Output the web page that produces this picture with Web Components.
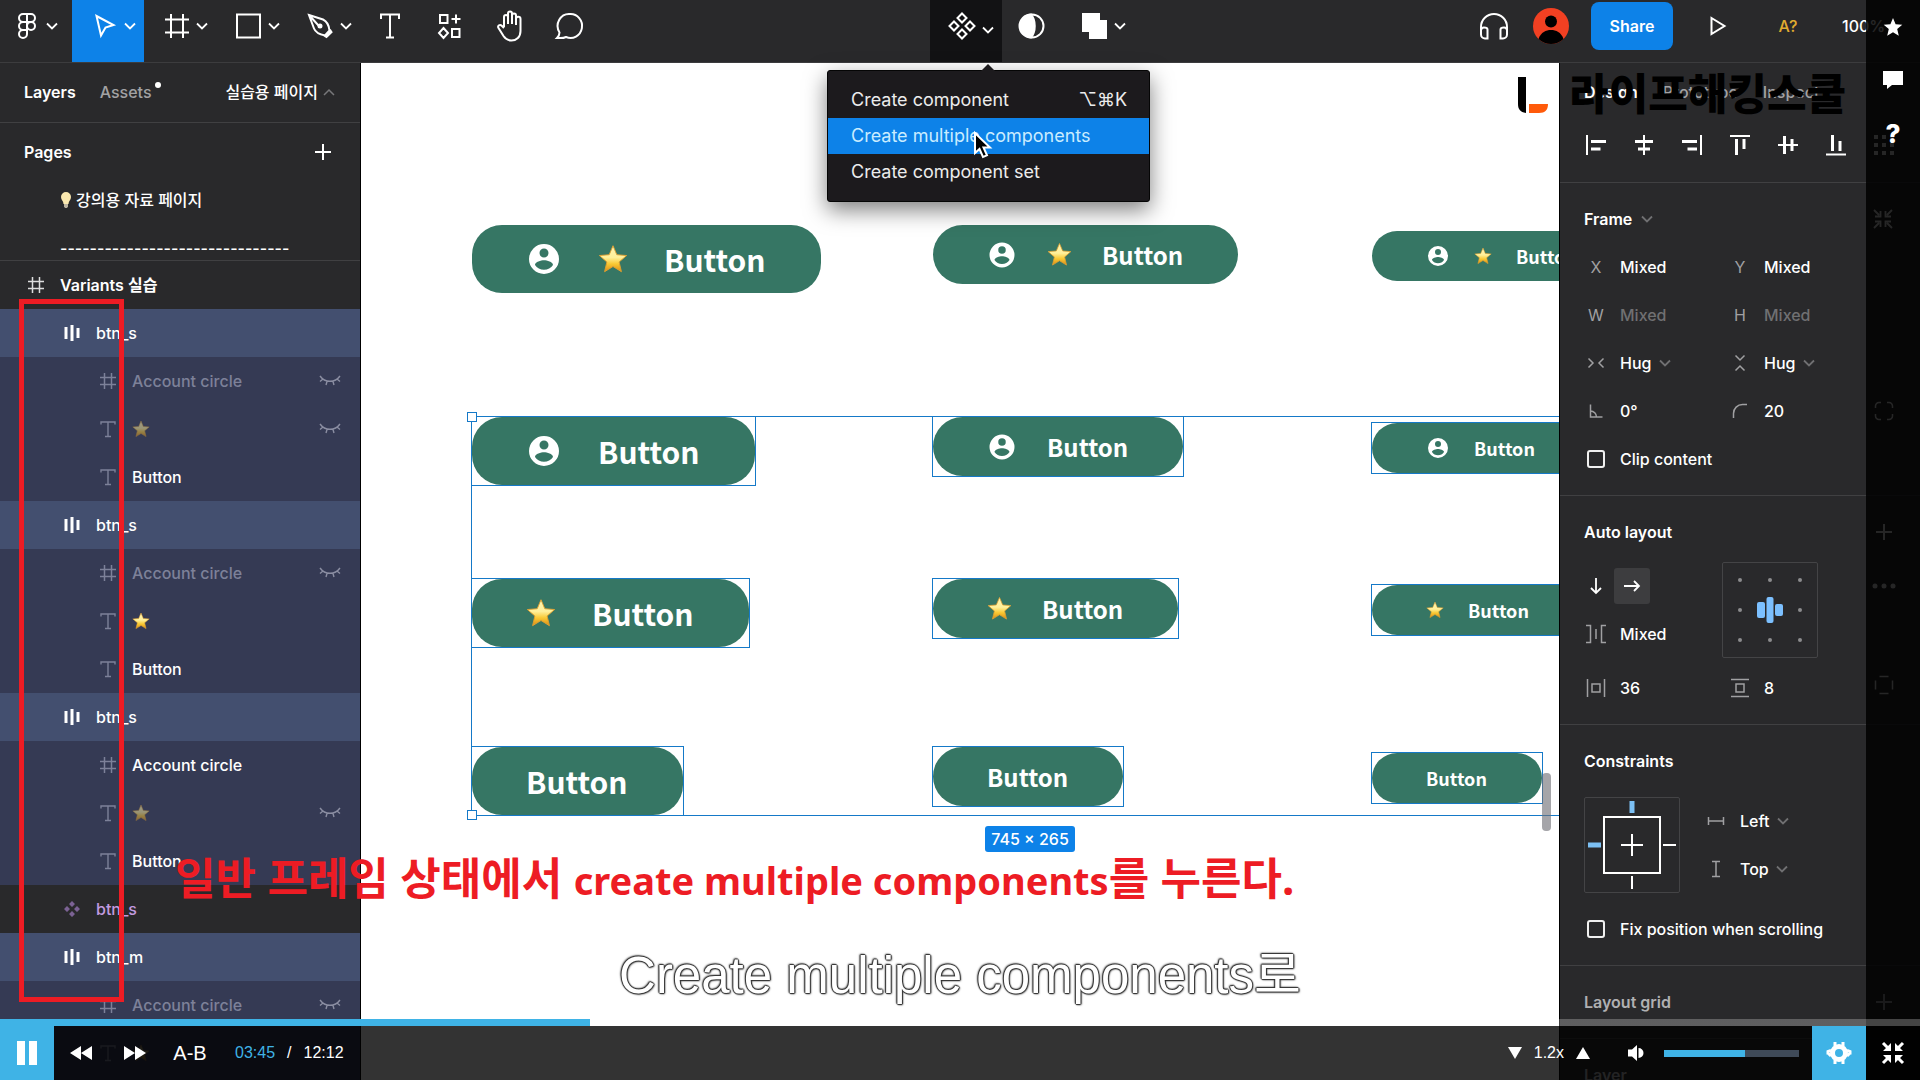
<!DOCTYPE html>
<html lang="ko">
<head>
<meta charset="utf-8">
<title>Variants 실습</title>
<style>
  body {
    margin: 0;
    background: #fff;
    color: #fff;
    font: 500 16px/24px Inter, "Noto Sans CJK KR", sans-serif;
  }
</style>
</head>
<body>
<lecture-player></lecture-player>

<script>
// アイコン: [幅, 高さ, SVGの中身]
const ICONS = {
  chevron: [14, 8, '<path d="M2 1.500l5 5 5-5" stroke-width="1.800"/>'],
  chevronUp: [14, 8, '<path d="M2 7l5-5 5 5" stroke-width="1.500"/>'],
  figma: [18, 26, '<path d="M9 1H5a4 4 0 0 0 0 8h4zM9 1h4a4 4 0 0 1 0 8H9zM9 9H5a4 4 0 0 0 0 8h4zM5 17a4 4 0 1 0 4 4v-4z"/><circle cx="13" cy="13" r="4"/>'],
  move: [22, 24, '<path d="M2.500 2l17 9-8 2.500L7 21.500z"/>'],
  frame: [26, 26, '<path d="M7 1v24M19 1v24M1 6.500h24M1 19.500h24"/>'],
  rect: [26, 26, '<path d="M1 1.500h23v23H1z"/>'],
  pen: [26, 26, '<path d="M1 2l14 4.500c4 2 6 6 6.500 11l-4.500 5c-5-1-9.500-3-11-7zM1 2l9.500 10.500M17 23l5.500-5.500 1 1.500-5 5z"/><circle cx="12" cy="13" r="1.500" fill="currentColor"/>'],
  text: [22, 26, '<path d="M2 6V1.500h18V6M11 1.500v23M7 24.500h8"/>'],
  resources: [26, 26, '<path d="M3 2h7.500v8H3zM15 16h7.500v8H15zM19 1.500v9M14.500 6h9M6.500 15l4.500 5-4.500 5L2 20z"/>'],
  hand: [30, 32, '<path d="M9 17V7a2 2 0 0 1 4 0v7M13 13V3.500a2 2 0 0 1 4 0V14M17 5.500a2 2 0 0 1 4 0V15M21 9a2 2 0 0 1 4.500 0v12c0 6-4 9.500-9 9.500-4 0-6-1.500-8-4.500l-5-8c-1.500-2.500 1.500-4 3.500-2L9 18"/>'],
  comment: [28, 28, '<path d="M14 2a11.500 12 0 1 1-4 23c-3 1.500-6 1-9 1 2-2 2.500-3 2.500-5.500A11.500 12 0 0 1 14 2z"/>'],
  component: [28, 28, '<path d="M13 1.500l4.500 4.500-4.500 4.500L8.500 6zM13 17.500l4.500 4.500-4.500 4.500L8.500 22zM5 9.500l4.500 4.500L5 18.500.5 14zM21 9.500l4.500 4.500-4.500 4.500-4.500-4.500z"/>'],
  mask: [26, 26, '<circle cx="13" cy="13" r="11.500"/><path d="M12 1.500a11.500 11.500 0 0 0 0 23c5-6 5-17 0-23z" fill="currentColor"/>'],
  union: [26, 26, '<path d="M1 1h16v7h7v17H8v-7H1z" fill="currentColor"/>'],
  headphones: [30, 28, '<path d="M2 19v-4a13 13 0 0 1 26 0v4M8.500 17.500v9H6a4 4 0 0 1-4-4v-4.500a3 3 0 0 1 3-2.500c2 0 3.500.5 3.500 2zM21.500 17.500v9H24a4 4 0 0 0 4-4v-4.500a3 3 0 0 0-3-2.500c-2 0-3.500.5-3.500 2z"/>'],
  avatar: [36, 36, '<circle cx="18" cy="18" r="18" fill="#f24022" stroke="none"/><circle cx="18" cy="13.500" r="6" fill="#000" stroke="none"/><path d="M5.500 31C8 24 13 22 18 22s10 2 12.500 9a18 18 0 0 1-25 0z" fill="#000" stroke="none"/>'],
  play: [18, 20, '<path d="M2.500 2l13 8-13 8z"/>'],
  plus: [18, 18, '<path d="M9 1v16M1 9h16"/>'],
  bulb: [12, 18, '<path d="M6 1a5 5 0 0 1 5 5c0 3-2.500 4-2.500 7h-5C3.500 10 1 9 1 6a5 5 0 0 1 5-5z" fill="#fbe9b0" stroke="none"/><path d="M4 13h4v2.500l-1 1.500H5l-1-1.500z" fill="#bbb3a0" stroke="none"/>'],
  hash: [18, 18, '<path d="M5.500 1v16M12.500 1v16M1 5.500h16M1 12.500h16" stroke-width="1.500"/>'],
  tee: [16, 18, '<path d="M1 4.500V2h14v2.500M8 2v14M5 16.500h6" stroke-width="1.400"/>'],
  bars: [18, 18, '<path d="M1.500 3h3v12h-3zM7.500 1h3v16h-3zM13.500 4h3v10h-3z" fill="currentColor" stroke="none"/>'],
  diamonds: [18, 18, '<path d="M9 1l3 3-3 3-3-3zM9 11l3 3-3 3-3-3zM4 6l3 3-3 3-3-3zM14 6l3 3-3 3-3-3z" fill="currentColor" stroke="none"/>'],
  hidden: [22, 12, '<path d="M1 1c5 7 15 7 20 0M4 4L1 6.500M8 6.500L7 10M14 6.500l1 3.500M18 4l3 2.500" stroke-width="1.400"/>'],
  star: [26, 26, '<defs><linearGradient id="g" x1="0" y1="0" x2="0" y2="1"><stop offset="0" stop-color="#fff3b0"/><stop offset=".45" stop-color="#fff09a"/><stop offset=".7" stop-color="#f9c934"/><stop offset="1" stop-color="#dd8d14"/></linearGradient></defs><path d="M13 1.500l3.300 7.800 8.500.7-6.500 5.600 2 8.400-7.300-4.500L5.700 24l2-8.400L1.200 10l8.500-.7z" fill="url(#g)" stroke="#e0a030" stroke-width=".8" stroke-linejoin="round"/>'],
  account: [24, 24, '<path d="M12 2a10 10 0 1 0 0 20 10 10 0 0 0 0-20zm0 3a3 3 0 1 1 0 6 3 3 0 0 1 0-6zm0 14.200a7.200 7.200 0 0 1-6-3.220c.03-1.990 4-3.080 6-3.080 1.990 0 5.970 1.090 6 3.080a7.200 7.200 0 0 1-6 3.220z" fill="currentColor" stroke="none"/>'],
  alignLeft: [22, 22, '<path d="M2 1v20" /><path d="M6 7.500h15M6 15h9.500" stroke-width="3"/>'],
  alignCenter: [22, 22, '<path d="M11 1v20" /><path d="M2 7.500h18M5 15h12" stroke-width="3"/>'],
  alignRight: [22, 22, '<path d="M20 1v20" /><path d="M1 7.500h15M6.500 15H16" stroke-width="3"/>'],
  alignTop: [22, 22, '<path d="M1 2h20" /><path d="M7.500 5v16M15 5v10" stroke-width="3"/>'],
  alignMiddle: [22, 22, '<path d="M1 11h20" /><path d="M7.500 2v18M15 5v12" stroke-width="3"/>'],
  alignBottom: [22, 22, '<path d="M1 20.500h20" /><path d="M7.500 1v16M15 7v10" stroke-width="3"/>'],
  dots9: [20, 20, '<path d="M0 2h4m4 0h4m4 0h4M0 10h4m4 0h4m4 0h4M0 18h4m4 0h4m4 0h4" stroke-width="4"/>'],
  shrink: [20, 20, '<path d="M1 1l5 5M7.500 2v5.500H2M19 1l-5 5M12.500 2v5.500H18M1 19l5-5M2 12.500h5.500V18M19 19l-5-5M18 12.500h-5.500V18" stroke-width="1.800"/>'],
  hugX: [18, 14, '<path d="M1.500 2.500L6 7l-4.500 4.500M16.500 2.500L12 7l4.500 4.500" stroke-width="1.500"/>'],
  hugY: [14, 18, '<path d="M2.500 1.500L7 6l4.500-4.500M2.500 16.500L7 12l4.500 4.500" stroke-width="1.500"/>'],
  angle: [16, 16, '<path d="M2.500 1.500v12.500h12M2.500 8a6 6 0 0 1 6 6" stroke-width="1.500"/>'],
  radius: [16, 16, '<path d="M1.500 15v-4.500a9 9 0 0 1 9-9H15" stroke-width="1.500"/>'],
  corners: [20, 20, '<path d="M1.500 7V5a3.500 3.500 0 0 1 3.500-3.500h2M13 1.500h2A3.500 3.500 0 0 1 18.500 5v2M18.500 13v2a3.500 3.500 0 0 1-3.500 3.500h-2M7 18.500H5A3.500 3.500 0 0 1 1.500 15v-2" stroke-width="1.500"/>'],
  sides: [20, 20, '<path d="M5.500 1.500h9M5.500 18.500h9M1.500 5.500v9M18.500 5.500v9" stroke-width="1.500"/>'],
  more: [24, 6, '<g fill="currentColor" stroke="none"><circle cx="3" cy="3" r="2.500"/><circle cx="12" cy="3" r="2.500"/><circle cx="21" cy="3" r="2.500"/></g>'],
  down: [14, 18, '<path d="M7 1v15M2 11l5 5 5-5" stroke-width="1.800"/>'],
  right: [18, 14, '<path d="M1 7h15M11 2l5 5-5 5" stroke-width="1.800"/>'],
  spacing: [22, 20, '<path d="M1 1.500h4.500v17H1M21 1.500h-4.500v17H21M11 5v10" stroke-width="1.500"/>'],
  padX: [20, 20, '<path d="M1.500 1v18M18.500 1v18M6 6h8v8H6z" stroke-width="1.500"/>'],
  padY: [20, 20, '<path d="M1 1.500h18M1 18.500h18M6 6h8v8H6z" stroke-width="1.500"/>'],
  conX: [18, 10, '<path d="M1.500 1v8M16.500 1v8M1.500 5h15" stroke-width="1.500"/>'],
  conY: [10, 18, '<path d="M1 1.500h8M1 16.500h8M5 1.500v15" stroke-width="1.500"/>'],
  alignPad: [96, 96, '<rect x=".5" y=".5" width="95" height="95" rx="1.500" stroke="#444446" stroke-width="1"/><g fill="#8c8c8e" stroke="none"><circle cx="18" cy="18" r="2"/><circle cx="48" cy="18" r="2"/><circle cx="78" cy="18" r="2"/><circle cx="18" cy="48" r="2"/><circle cx="78" cy="48" r="2"/><circle cx="18" cy="78" r="2"/><circle cx="48" cy="78" r="2"/><circle cx="78" cy="78" r="2"/></g><g fill="#7cc0ff" stroke="none"><rect x="35" y="40" width="8" height="16" rx="2"/><rect x="44.500" y="35" width="7" height="26" rx="2"/><rect x="53" y="42" width="8" height="12" rx="2"/></g>'],
  constraintPad: [96, 96, '<rect x=".5" y=".5" width="95" height="95" rx="1.500" stroke="#444446" stroke-width="1"/><path d="M20 20h56v56H20zM48 37v22M37 48h22M79 48h13M48 79v13"/><path d="M48 4v12M4 48h13" stroke="#7cc0f4" stroke-width="5"/>'],
  pointer: [20, 28, '<path d="M2 2v20l4.500-4 3.500 8 4-1.700-3.500-7.800h6.500z" fill="#000" stroke="#fff"/>'],
  logo: [32, 36, '<path d="M1 0h8v36C3 35 1 32 1 27z" fill="#000" stroke="none"/><path d="M12 27h19c0 6-3 9-9 9H12z" fill="#ff5a0a" stroke="none"/>'],
  fav: [20, 20, '<path d="M10 1l2.600 6.200 6.700.5-5.100 4.400 1.600 6.600L10 15.200l-5.800 3.500 1.600-6.600L.7 7.700l6.700-.5z" fill="currentColor" stroke="none"/>'],
  bubble: [20, 20, '<path d="M0 1h20v14H9l-5 4v-4H0z" fill="currentColor" stroke="none"/>'],
  pause: [20, 24, '<path d="M0 0h8v24H0zM12 0h8v24h-8z" fill="currentColor" stroke="none"/>'],
  rewind: [22, 14, '<path d="M11 0v14L0 7zM22 0v14L11 7z" fill="currentColor" stroke="none"/>'],
  forward: [22, 14, '<path d="M0 0v14l11-7zM11 0v14l11-7z" fill="currentColor" stroke="none"/>'],
  triDown: [14, 12, '<path d="M0 0h14L7 12z" fill="currentColor" stroke="none"/>'],
  triUp: [14, 12, '<path d="M0 12h14L7 0z" fill="currentColor" stroke="none"/>'],
  volume: [16, 16, '<path d="M0 4.500h4L9 0v16l-5-4.500H0zM10.500 3a5 5 0 0 1 0 10z" fill="currentColor" stroke="none"/>'],
  gear: [24, 24, '<circle cx="12" cy="12" r="6.500" stroke-width="5"/><path d="M8 1v4M16 1v4M8 19v4M16 19v4M1 13.500v-3l3-1M23 13.500v-3l-3-1M1 12l3 3M23 12l-3 3" stroke-width="3"/>'],
  exit: [22, 22, '<path d="M1 1l5 5M21 1l-5 5M1 21l5-5M21 21l-5-5" stroke-width="3"/><path d="M9 1v8H1l3-3 2-2zM13 1v8h8l-3-3-2-2zM9 21v-8H1l3 3 2 2zM13 21v-8h8l-3 3-2 2z" fill="currentColor" stroke="none"/>'],
};

// Shadow DOMを作る共通処理
const attach = (host, html) => {
  const template = document.createElement("template");
  template.innerHTML = `<style>
    *, ::before { box-sizing: border-box; }
    button, input, select {
      margin: 0; padding: 0; border: 0; outline: 0; border-radius: 0;
      background: none; color: inherit; font: inherit; appearance: none;
    }
    button { display: flex; align-items: center; justify-content: center; }
    a { color: inherit; text-decoration: none; }
  </style>${html}`;
  host.attachShadow({ mode: "open" }).appendChild(template.content.cloneNode(true));
};

class UiIcon extends HTMLElement {
  constructor() {
    super();
    this.attachShadow({ mode: "open" });
  }
  connectedCallback() {
    const [w, h, body] = ICONS[this.getAttribute("name")];
    const size = this.getAttribute("size");
    this.shadowRoot.innerHTML = `<style>
      :host { display: inline-flex; flex: none; }
      svg { display: block; overflow: visible; }
    </style>
    <svg width="${size || w}" height="${size || h}" viewBox="0 0 ${w} ${h}" fill="none" stroke="currentColor" stroke-width="2" aria-hidden="true">${body}</svg>`;
  }
}

class ToolButton extends HTMLElement {
  connectedCallback() {
    const icon = this.getAttribute("icon");
    attach(this, `<style>
      :host { display: block; width: 60px; }
      :host([menu]) { width: 72px; }
      :host([active]) { background: #0d82e8; }
      :host([open]) { background: #121214; }
      button { width: 100%; height: 62px; padding-bottom: 10px; }
      :host([menu]) button { gap: 5px; justify-content: flex-start; padding-left: 20px; }
      :host([first]) button { padding-left: 14px; }
      .box { display: flex; width: 26px; justify-content: center; }
      :host([open]) .arrow { padding-top: 8px; }
    </style>
    <button aria-label="${icon}"><span class="box"><ui-icon name="${icon}"></ui-icon></span>
      ${this.hasAttribute("menu") ? '<ui-icon class="arrow" name="chevron"></ui-icon>' : ""}</button>`);
  }
}

class ComponentMenu extends HTMLElement {
  constructor() {
    super();
    attach(this, `<style>
      :host {
        position: relative; display: block; width: 323px; padding: 11px 0;
        background: #1c1a1d; border: 1px solid #050505; border-radius: 3px;
        box-shadow: 0 8px 22px rgba(0, 0, 0, .5); color: #ececec;
        font-size: 18px; font-weight: 400;
      }
      :host::before {
        content: ""; position: absolute; left: 153px; top: -7px;
        border: 7px solid transparent; border-top: 0; border-bottom-color: #1c1a1d;
      }
      button { width: 100%; height: 36px; padding: 0 22px 0 23px; justify-content: space-between; }
      .on { background: #0d82e8; color: #c9ecff; }
    </style>
    <button><span>Create component</span><span>⌥⌘K</span></button>
    <button class="on">Create multiple components</button>
    <button>Create component set</button>`);
  }
}

class TopToolbar extends HTMLElement {
  constructor() {
    super();
    attach(this, `<style>
      :host { display: flex; justify-content: space-between; height: 63px; background: #29292b; border-bottom: 1px solid #3c3c3e; }
      div { display: flex; }
      .right { height: 52px; align-items: center; }
      .right > * { display: flex; justify-content: center; }
      .phones { width: 36px; }
      .me { width: 78px; }
      .share { width: 84px; }
      .share button { width: 82px; height: 48px; border-radius: 8px; background: #0d82e8; font-weight: 600; }
      .play { width: 88px; }
      .missing { width: 52px; color: #e0ac30; }
      .right .zoom { width: 106px; padding-left: 28px; justify-content: flex-start; }
      .anchor { position: relative; }
      component-menu { position: absolute; left: -103px; top: 70px; z-index: 2; }
    </style>
    <div>
      <tool-button icon="figma" menu first></tool-button>
      <tool-button icon="move" menu active></tool-button>
      <tool-button icon="frame" menu></tool-button>
      <tool-button icon="rect" menu></tool-button>
      <tool-button icon="pen" menu></tool-button>
      <tool-button icon="text"></tool-button>
      <tool-button icon="resources"></tool-button>
      <tool-button icon="hand"></tool-button>
      <tool-button icon="comment"></tool-button>
    </div>
    <div>
      <div class="anchor">
        <tool-button icon="component" menu open></tool-button>
        <component-menu></component-menu>
      </div>
      <tool-button icon="mask"></tool-button>
      <tool-button icon="union" menu></tool-button>
      <span style="width: 12px"></span>
    </div>
    <div class="right">
      <button class="phones" aria-label="Audio"><ui-icon name="headphones"></ui-icon></button>
      <span class="me"><ui-icon name="avatar"></ui-icon></span>
      <span class="share"><button>Share</button></span>
      <button class="play" aria-label="Present"><ui-icon name="play"></ui-icon></button>
      <button class="missing">A?</button>
      <button class="zoom">100%</button>
    </div>`);
  }
}

class LayerRow extends HTMLElement {
  connectedCallback() {
    const icon = this.getAttribute("icon");
    attach(this, `<style>
      :host { display: flex; align-items: center; height: 48px; padding: 0 19px 0 99px; gap: 15px; background: #353a54; }
      .icon { display: flex; width: 18px; justify-content: center; color: #7d8199; }
      .name { flex: 1; display: flex; }
      .eye { color: #8b8ea2; }
      :host([parent]) { padding-left: 63px; background: #434f6f; }
      :host([parent]) .icon { color: #fff; }
      :host([top]) { padding-left: 27px; background: none; font-weight: 600; }
      :host([top]) .icon { color: #ddd; }
      :host([main]) { padding-left: 63px; background: none; color: #c29be0; }
      :host([main]) .icon { color: #7b6294; }
      :host([off]) .name { color: #7d8199; }
      :host([off]) .name ::slotted(ui-icon) { opacity: .5; }
    </style>
    <span class="icon"><ui-icon name="${icon}"></ui-icon></span>
    <span class="name"><slot></slot></span>
    ${this.hasAttribute("off") ? '<ui-icon class="eye" name="hidden"></ui-icon>' : ""}`);
  }
}

class LayersPanel extends HTMLElement {
  constructor() {
    super();
    // [btnの名前, アイコン非表示, 星非表示]
    const groups = [["btn_s", true, true], ["btn_s", true, false], ["btn_s", false, true]];
    const children = (accountOff, starOff) => `
      <layer-row icon="hash" ${accountOff ? "off" : ""}>Account circle</layer-row>
      <layer-row icon="tee" ${starOff ? "off" : ""}><ui-icon name="star" size="18"></ui-icon></layer-row>
      <layer-row icon="tee">Button</layer-row>`;
    attach(this, `<style>
      :host { display: block; overflow: hidden; background: #29292b; border-right: 1px solid #000; }
      header { display: flex; align-items: center; height: 60px; padding: 0 24px 2px; gap: 24px; border-bottom: 1px solid #404042; }
      header b { font-weight: 600; }
      .assets { position: relative; color: #a2a2a4; }
      .assets::after { content: ""; position: absolute; right: -9px; top: 2px; width: 6px; height: 6px; border-radius: 3px; background: #fff; }
      .page { display: flex; align-items: center; gap: 4px; margin-left: auto; }
      .page ui-icon { color: #77777a; }
      .pages { height: 138px; padding-top: 5px; overflow: hidden; border-bottom: 1px solid #404042; }
      .pages div { display: flex; align-items: center; height: 48px; padding-left: 60px; gap: 4px; }
      .pages .title { justify-content: space-between; padding: 0 28px 0 24px; font-weight: 600; }
    </style>
    <header>
      <b>Layers</b><a class="assets" href="#">Assets</a>
      <button class="page">실습용 페이지<ui-icon name="chevronUp"></ui-icon></button>
    </header>
    <section class="pages">
      <div class="title">Pages<button aria-label="Add page"><ui-icon name="plus"></ui-icon></button></div>
      <div><ui-icon name="bulb"></ui-icon><a href="#">강의용 자료 페이지</a></div>
      <div>-------------------------------</div>
    </section>
    <layer-row top icon="hash">Variants 실습</layer-row>
    ${groups.map(([name, a, s]) => `<layer-row parent icon="bars">${name}</layer-row>${children(a, s)}`).join("")}
    <layer-row main icon="diamonds">btn_s</layer-row>
    <layer-row parent icon="bars">btn_m</layer-row>
    ${children(true, true)}`);
  }
}

class DesignButton extends HTMLElement {
  connectedCallback() {
    const [icon, star] = { l: [36, 30], m: [30, 25], s: [24, 18] }[this.getAttribute("size")];
    attach(this, `<style>
      :host {
        display: flex; align-items: center; width: max-content; height: 68px; padding: 0 55px 0 54px; gap: 36px;
        border-radius: 30px; background: #367664; font: 700 30px/36px "Noto Sans CJK KR", sans-serif;
      }
      :host([size="m"]) { height: 59px; gap: 30px; font-size: 24px; }
      :host([size="s"]) { height: 50px; gap: 24px; font-size: 18px; }
    </style>
    ${this.hasAttribute("account") ? `<ui-icon name="account" size="${icon}"></ui-icon>` : ""}
    ${this.hasAttribute("star") ? `<ui-icon name="star" size="${star}"></ui-icon>` : ""}
    <span>Button</span>`);
  }
}

class DesignCanvas extends HTMLElement {
  constructor() {
    super();
    // キャンバス上のノード: 列のx座標と行のy座標
    const columns = [["l", 111, 0], ["m", 572, 0], ["s", 1011, 6]];
    const rows = [[162, "account star", ""], [354, "account", "picked"], [516, "star", "picked"], [684, "", "picked"]];
    const nodes = rows.flatMap(([y, parts, cls]) => columns.map(([size, x, dy]) =>
      `<div class="node ${cls}" style="left: ${x}px; top: ${y + dy}px"><design-button size="${size}" ${parts}></design-button></div>`));
    attach(this, `<style>
      :host { display: block; position: relative; overflow: hidden; background: #fff; border-top: 1px solid #000; margin-top: -1px; }
      .node { position: absolute; }
      .picked { outline: 1px solid #1579c8; }
      .selection { position: absolute; left: 111px; top: 354px; width: 1141px; height: 398px; outline: 1px solid #1579c8; }
      .handle { position: absolute; left: -5px; width: 10px; height: 10px; border: 1px solid #1579c8; background: #fff; }
      .handle.a { top: -5px; }
      .handle.b { bottom: -5px; }
      .size { position: absolute; left: 624px; top: 763px; width: 90px; height: 26px; border-radius: 3px; background: #0d82e8; line-height: 26px; text-align: center; }
      .scroll { position: absolute; right: 8px; top: 710px; width: 9px; height: 58px; border-radius: 4px; background: rgba(110, 110, 116, .62); }
    </style>
    ${nodes.join("")}
    <div class="selection"><span class="handle a"></span><span class="handle b"></span></div>
    <div class="size">745 × 265</div>
    <div class="scroll"></div>`);
  }
}

class PropField extends HTMLElement {
  connectedCallback() {
    const value = this.getAttribute("value");
    const label = this.getAttribute("label");
    const icon = this.getAttribute("icon");
    const control = this.hasAttribute("select")
      ? `<select id="f"><option>${value}</option></select><ui-icon class="arrow" name="chevron"></ui-icon>`
      : `<input id="f" value="${value}">`;
    attach(this, `<style>
      :host { display: flex; align-items: center; height: 48px; }
      label { display: flex; justify-content: center; width: 24px; margin-right: 12px; color: #a0a0a2; font-weight: 400; }
      input { width: 80px; }
      .arrow { margin-left: 6px; color: #707072; }
      :host([muted]) input { color: #707072; }
    </style>
    <label for="f" ${icon ? `aria-label="${label}"` : ""}>${icon ? `<ui-icon name="${icon}"></ui-icon>` : label}</label>${control}`);
  }
}

class CheckField extends HTMLElement {
  constructor() {
    super();
    attach(this, `<style>
      :host { display: flex; align-items: center; height: 48px; padding-left: 3px; }
      input { width: 18px; height: 18px; margin-right: 15px; border: 2px solid #f0f0f0; border-radius: 3px; }
    </style>
    <input type="checkbox" id="c"><label for="c"><slot></slot></label>`);
  }
}

class PanelSection extends HTMLElement {
  constructor() {
    super();
    attach(this, `<style>
      :host { display: block; padding: 12px 0 12px 24px; border-bottom: 1px solid #404042; }
      header { display: flex; align-items: center; height: 48px; padding-right: 27px; font-weight: 600; }
      slot[name="title"] { display: flex; align-items: center; gap: 8px; }
      .side { display: flex; margin-left: auto; }
      :host([muted]) header { color: #b0b0b2; }
    </style>
    <header><slot name="title"></slot><span class="side"><slot name="action"></slot></span></header>
    <slot></slot>`);
  }
}

class DesignPanel extends HTMLElement {
  constructor() {
    super();
    const aligns = ["alignLeft", "alignCenter", "alignRight", "alignTop", "alignMiddle", "alignBottom", "dots9"];
    attach(this, `<style>
      :host { display: block; overflow: hidden; background: #29292b; border-left: 1px solid #000; }
      nav { display: flex; align-items: center; height: 58px; padding-left: 24px; gap: 25px; color: #a2a2a4; }
      nav b { font-weight: 600; color: #fff; }
      .aligns { display: flex; height: 62px; padding: 0 12px 13px; border-bottom: 1px solid #404042; }
      .aligns button { width: 48px; }
      .grid { display: grid; grid-template-columns: 144px 144px 1fr; align-items: center; }
      .grid > ui-icon { justify-self: center; margin-right: 24px; }
      .auto { padding-top: 6px; }
      .dir { display: flex; align-items: center; height: 48px; }
      .dir button { width: 24px; height: 36px; margin-right: 6px; }
      .dir .on { width: 36px; border-radius: 3px; background: #3d3d3f; }
      .pad { grid-row: span 2; margin-left: -6px; width: 96px; height: 96px; }
      .last { height: 54px; padding-top: 6px; }
      .constraints { display: flex; gap: 24px; padding: 12px 0; }
      .caret { color: #707072; }
    </style>
    <nav><b>Design</b><a href="#">Prototype</a><a href="#">Inspect</a></nav>
    <div class="aligns">${aligns.map((n) => `<button aria-label="${n}"><ui-icon name="${n}"></ui-icon></button>`).join("")}</div>
    <panel-section>
      <span slot="title">Frame</span><ui-icon class="caret" slot="title" name="chevron"></ui-icon>
      <ui-icon slot="action" name="shrink"></ui-icon>
      <div class="grid">
        <prop-field label="X" value="Mixed"></prop-field><prop-field label="Y" value="Mixed"></prop-field><span></span>
        <prop-field label="W" value="Mixed" muted></prop-field><prop-field label="H" value="Mixed" muted></prop-field><span></span>
        <prop-field label="Width" icon="hugX" value="Hug" select></prop-field><prop-field label="Height" icon="hugY" value="Hug" select></prop-field><span></span>
        <prop-field label="Rotation" icon="angle" value="0°"></prop-field><prop-field label="Radius" icon="radius" value="20"></prop-field><ui-icon name="corners"></ui-icon>
      </div>
      <check-field>Clip content</check-field>
    </panel-section>
    <panel-section>
      <span slot="title">Auto layout</span>
      <ui-icon slot="action" name="plus"></ui-icon>
      <div class="grid auto">
        <div class="dir">
          <button aria-label="Vertical"><ui-icon name="down"></ui-icon></button>
          <button class="on" aria-label="Horizontal"><ui-icon name="right"></ui-icon></button>
        </div>
        <div class="pad"><ui-icon name="alignPad"></ui-icon></div>
        <ui-icon name="more"></ui-icon>
        <prop-field label="Spacing" icon="spacing" value="Mixed"></prop-field><span></span>
        <prop-field class="last" label="Horizontal padding" icon="padX" value="36"></prop-field>
        <prop-field class="last" label="Vertical padding" icon="padY" value="8"></prop-field>
        <ui-icon name="sides"></ui-icon>
      </div>
    </panel-section>
    <panel-section>
      <span slot="title">Constraints</span>
      <div class="constraints">
        <ui-icon name="constraintPad"></ui-icon>
        <div>
          <prop-field label="Horizontal" icon="conX" value="Left" select></prop-field>
          <prop-field label="Vertical" icon="conY" value="Top" select></prop-field>
        </div>
      </div>
      <check-field>Fix position when scrolling</check-field>
    </panel-section>
    <panel-section muted><span slot="title">Layout grid</span><ui-icon slot="action" name="plus"></ui-icon></panel-section>
    <panel-section muted><span slot="title">Layer</span></panel-section>`);
  }
}

class PlayerControls extends HTMLElement {
  constructor() {
    super();
    attach(this, `<style>
      :host { display: block; font: 400 16px/24px "Liberation Sans", sans-serif; }
      input { display: block; height: 7px; }
      input::-webkit-slider-thumb { appearance: none; width: 0; height: 0; }
      .seek { width: 100%; background: linear-gradient(90deg, #3fb3e6 calc(225 / 732 * 100%), rgba(255, 255, 255, .25) 0); }
      .bar { display: flex; align-items: center; height: 54px; background: rgba(0, 0, 0, .8); }
      .block { width: 54px; height: 54px; }
      .blue { background: #3fb3e6; }
      .step { width: 54px; height: 54px; }
      .ab { width: 56px; font-size: 20px; }
      .time { display: flex; gap: 12px; margin-left: 17px; }
      .time b { font-weight: 400; color: #3fb3e6; }
      .speed { display: flex; align-items: center; gap: 12px; margin-left: auto; }
      .volume { display: flex; align-items: center; gap: 20px; margin: 0 13px 0 38px; }
      .volume input { width: 135px; background: linear-gradient(90deg, #3fb3e6 60%, #3f4a58 0); }
    </style>
    <input class="seek" type="range" min="0" max="732" value="225" aria-label="Seek">
    <div class="bar">
      <button class="block blue" aria-label="Pause"><ui-icon name="pause"></ui-icon></button>
      <button class="step" aria-label="Rewind"><ui-icon name="rewind"></ui-icon></button>
      <button class="step" aria-label="Forward"><ui-icon name="forward"></ui-icon></button>
      <button class="ab">A-B</button>
      <div class="time"><b>03:45</b><span>/</span><span>12:12</span></div>
      <div class="speed">
        <button aria-label="Slower"><ui-icon name="triDown"></ui-icon></button>
        <span>1.2x</span>
        <button aria-label="Faster"><ui-icon name="triUp"></ui-icon></button>
      </div>
      <div class="volume">
        <button aria-label="Mute"><ui-icon name="volume"></ui-icon></button>
        <input type="range" value="60" aria-label="Volume">
      </div>
      <button class="block blue" aria-label="Settings"><ui-icon name="gear"></ui-icon></button>
      <button class="block" aria-label="Exit full screen"><ui-icon name="exit"></ui-icon></button>
    </div>`);
  }
}

class LecturePlayer extends HTMLElement {
  constructor() {
    super();
    attach(this, `<style>
      :host { display: block; position: relative; height: 100vh; overflow: hidden; }
      .screen { display: grid; grid-template: 63px minmax(0, 1fr) / 361px minmax(0, 1fr) 361px; height: 100%; }
      top-toolbar { grid-column: 1 / -1; position: relative; z-index: 1; }
      design-canvas { z-index: 0; }
      .over { position: absolute; z-index: 2; }
      .pointer { left: 973px; top: 131px; }
      .mark { left: 19px; top: 299px; width: 105px; height: 703px; border: 5px solid #ed1c24; }
      .note { left: 175px; top: 848px; color: #ed1c24; font: 700 44px/60px "Noto Sans", "Noto Sans CJK KR", sans-serif; white-space: nowrap; }
      .note span { font-size: 38px; }
      .caption {
        left: 0; right: 0; top: 946px; text-align: center; font: 400 51px/60px "Liberation Sans", "Noto Sans CJK KR", sans-serif;
        text-shadow: 1px 0 1px #333, -1px 0 1px #333, 0 1px 1px #333, 0 -1px 1px #333, 1px 1px 2px #555, -1px -1px 2px #555;
      }
      .brand { right: 74px; top: 61px; display: flex; align-items: center; gap: 20px; color: #000; font: 900 43px/60px "Noto Sans CJK KR", sans-serif; }
      .brand ui-icon { padding-top: 7px; }
      .side { right: 0; top: 0; bottom: 0; width: 54px; background: rgba(0, 0, 0, .85); }
      .side button { width: 54px; height: 53px; }
      .side .help { height: 56px; font-size: 26px; font-weight: 800; }
      player-controls { position: absolute; z-index: 3; left: 0; right: 0; bottom: 0; }
    </style>
    <div class="screen">
      <top-toolbar></top-toolbar>
      <layers-panel></layers-panel>
      <design-canvas></design-canvas>
      <design-panel></design-panel>
    </div>
    <ui-icon class="over pointer" name="pointer"></ui-icon>
    <div class="over brand"><ui-icon name="logo"></ui-icon>라이프해킹스쿨</div>
    <div class="over mark"></div>
    <div class="over note">일반 프레임 상태에서 <span>create multiple components</span>를 누른다.</div>
    <div class="over caption">Create multiple components로</div>
    <aside class="over side">
      <button aria-label="Favourite"><ui-icon name="fav"></ui-icon></button>
      <button aria-label="Comments"><ui-icon name="bubble"></ui-icon></button>
      <button class="help">?</button>
    </aside>
    <player-controls></player-controls>`);
  }
}

customElements.define("ui-icon", UiIcon);
customElements.define("tool-button", ToolButton);
customElements.define("component-menu", ComponentMenu);
customElements.define("top-toolbar", TopToolbar);
customElements.define("layer-row", LayerRow);
customElements.define("layers-panel", LayersPanel);
customElements.define("design-button", DesignButton);
customElements.define("design-canvas", DesignCanvas);
customElements.define("prop-field", PropField);
customElements.define("check-field", CheckField);
customElements.define("panel-section", PanelSection);
customElements.define("design-panel", DesignPanel);
customElements.define("player-controls", PlayerControls);
customElements.define("lecture-player", LecturePlayer);
</script>
</body>
</html>
